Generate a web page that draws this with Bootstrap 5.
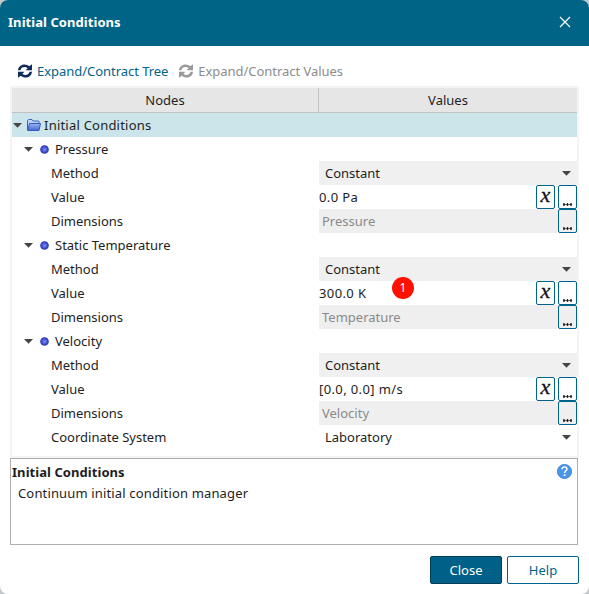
<!DOCTYPE html>
<html lang="en">
<head>
<meta charset="utf-8">
<meta name="viewport" content="width=device-width, initial-scale=1">
<title>Initial Conditions</title>
<link href="https://cdn.jsdelivr.net/npm/bootstrap@5.3.0/dist/css/bootstrap.min.css" rel="stylesheet">
<style>
body{background:#c4c8ca;font-family:"Noto Sans",sans-serif;font-size:13px;line-height:24px;color:#1e1e1e;overflow:hidden}
.dialog{width:589px;height:594px;border-radius:8px}
.titlebar{height:46px;background:#006487;font-size:13px;padding:0 18px 2px 8px}
.titlebar span,.info strong{letter-spacing:.06px}
.tools{height:40px;padding:13px 0 0 17px;color:#00638a}
.tools svg{margin-right:4px}
.tool-tree{letter-spacing:-.04px}
.tool-off{color:#8c8c8c;margin-left:10px;letter-spacing:-.04px}
.tree{margin:0 10px;height:372px;border:2px solid #f4f4f4}
.tree-head{height:25px;background:#e6e6e6;border-bottom:1px solid #c3c3c3}
.tree-row{height:24px}
.name-col{width:307px;white-space:nowrap}
.tree-head .name-col{border-right:1px solid #c3c3c3}
.value-col{width:258px;white-space:nowrap}
.selected{background:#cce5ea}
.selected .caret{margin:0 5px 0 1px}
.selected .folder{margin-right:3px}
.selected span{letter-spacing:.22px}
.group-cell{padding-left:12px}
.leaf-cell{padding-left:39px}
.caret{width:9px;height:5px;flex:none}
.group-cell .caret{margin-right:6.500px}
.group-cell .dot{margin-right:6.500px}
.combo{background:#f0f0f0;padding:0 6px}
.combo-plain{background:#fff}
.readonly-cell{background:#efefef;color:#8a8a8a;padding-left:3px}
.reading{letter-spacing:.38px}
.mini{width:19px;height:24px;border:1px solid #00638a;border-radius:2px;background:#fff;flex:none}
.mini-x{margin-right:3px;font:italic 22px/20px "Liberation Serif",serif;color:#111;justify-content:center;-webkit-text-stroke:.3px #111}
.mini-x span{margin-top:-1px}
.readonly-cell .mini{background:#efefef}
.marker{position:absolute;left:73px;top:-4px;width:22px;height:22px;border-radius:50%;background:#f10;color:#fff;font-size:12px;line-height:22px;text-align:center}
.info{margin:0 11px 0 10px;height:87px;border:1px solid #adadad;padding:1px 5px 0 1px}
.info svg{margin-bottom:2px}
.info-text{padding-left:6px;line-height:18px;letter-spacing:.15px}
.actions{padding:11px 10px 0 0;gap:5px}
.action{width:72px;height:28px;border:1px solid #00638a;border-radius:2px;padding:0 0 1px;font-size:13px;line-height:26px;color:#00638a;background:#fff}
.action-main{background:#006087;border-color:#004059;color:#fff}
</style>
<script src="https://cdn.jsdelivr.net/npm/bootstrap@5.3.0/dist/js/bootstrap.bundle.min.js"></script>
</head>
<body>
<svg width="0" height="0" class="position-absolute" aria-hidden="true">
<defs>
<linearGradient id="fold" x1="0" y1="0" x2="0" y2="1"><stop offset="0" stop-color="#9ab8f2"/><stop offset="1" stop-color="#4267d0"/></linearGradient>
<radialGradient id="ball"><stop offset="0" stop-color="#8290f2"/><stop offset=".5" stop-color="#4d5cd8"/><stop offset="1" stop-color="#262ea2"/></radialGradient>
<symbol id="caret" viewBox="0 0 9 5"><path d="M0 0h9L4.500 4.800z" fill="#454545"/></symbol>
<symbol id="dot" viewBox="0 0 9 9"><circle cx="4.500" cy="4.500" r="4.300" fill="url(#ball)"/></symbol>
<symbol id="sync" viewBox="0 0 16 14"><path d="M1 6.300C1.300 2.700 4.200.500 7.500.500c1.800 0 3.400.7 4.700 1.800L15 .300v6H8.600l2-2C9.700 3.500 8.700 3.100 7.500 3.100 5.400 3.100 3.900 4.300 3.500 6.300zM15 7.700c-.3 3.600-3.200 5.800-6.500 5.800-1.800 0-3.400-.7-4.700-1.800L1 13.700v-6h6.400l-2 2c.9.800 1.900 1.200 3.100 1.200 2.100 0 3.600-1.200 4-3.200z" fill="currentColor"/></symbol>
<symbol id="more" viewBox="0 0 17 22"><path d="M4 18h9v1H4z" fill="#777"/><path d="M4.500 17.500h1v2h-1zM8 17.500h1v2H8zM11.500 17.500h1v2h-1z" fill="#111" stroke="#111" stroke-width=".6"/></symbol>
</defs>
</svg>
<main class="dialog bg-white overflow-hidden">
<header class="titlebar d-flex align-items-center justify-content-between text-white fw-bold">
<span>Initial Conditions</span>
<svg width="12" height="12" viewBox="0 0 12 12"><path d="M1 1l10 10M11 1L1 11" stroke="#fff" stroke-width="1.200"/></svg>
</header>
<div class="tools d-flex align-items-start">
<span class="tool-tree d-flex align-items-center"><svg width="16" height="14" color="#0f2b5e"><use href="#sync"/></svg><span>Expand/Contract Tree</span></span>
<span class="tool-off d-flex align-items-center"><svg width="16" height="14" color="#9a9a9a"><use href="#sync"/></svg><span>Expand/Contract Values</span></span>
</div>
<section class="tree">
<div class="tree-head d-flex text-center"><div class="name-col">Nodes</div><div class="value-col">Values</div></div>
<div class="tree-row selected d-flex align-items-center"><svg class="caret"><use href="#caret"/></svg><svg class="folder" width="14" height="12" viewBox="0 0 14 12"><path d="M.5 11V1.500l1-1h3.500l1 1.500h5.500l.5.500V4" fill="#bdd2fa" stroke="#3a62c4"/><path d="M2.500 4.500h11l-1.500 7H.7z" fill="url(#fold)" stroke="#3459bd"/></svg><span>Initial Conditions</span></div>

<div class="tree-row group-cell d-flex align-items-center"><svg class="caret"><use href="#caret"/></svg><svg class="dot" width="9" height="9"><use href="#dot"/></svg><span>Pressure</span></div>
<div class="tree-row d-flex"><div class="name-col leaf-cell">Method</div><div class="value-col combo d-flex align-items-center justify-content-between"><span>Constant</span><svg class="caret"><use href="#caret"/></svg></div></div>
<div class="tree-row d-flex"><div class="name-col leaf-cell">Value</div><div class="value-col d-flex"><span class="reading me-auto">0.0 Pa</span><span class="mini mini-x d-flex"><span>x</span></span><span class="mini d-flex"><svg width="17" height="22"><use href="#more"/></svg></span></div></div>
<div class="tree-row d-flex"><div class="name-col leaf-cell">Dimensions</div><div class="value-col readonly-cell d-flex justify-content-between"><span>Pressure</span><span class="mini d-flex"><svg width="17" height="22"><use href="#more"/></svg></span></div></div>

<div class="tree-row group-cell d-flex align-items-center"><svg class="caret"><use href="#caret"/></svg><svg class="dot" width="9" height="9"><use href="#dot"/></svg><span>Static Temperature</span></div>
<div class="tree-row d-flex"><div class="name-col leaf-cell">Method</div><div class="value-col combo d-flex align-items-center justify-content-between"><span>Constant</span><svg class="caret"><use href="#caret"/></svg></div></div>
<div class="tree-row d-flex"><div class="name-col leaf-cell">Value</div><div class="value-col d-flex position-relative"><span class="reading me-auto">300.0 K</span><span class="marker">1</span><span class="mini mini-x d-flex"><span>x</span></span><span class="mini d-flex"><svg width="17" height="22"><use href="#more"/></svg></span></div></div>
<div class="tree-row d-flex"><div class="name-col leaf-cell">Dimensions</div><div class="value-col readonly-cell d-flex justify-content-between"><span>Temperature</span><span class="mini d-flex"><svg width="17" height="22"><use href="#more"/></svg></span></div></div>

<div class="tree-row group-cell d-flex align-items-center"><svg class="caret"><use href="#caret"/></svg><svg class="dot" width="9" height="9"><use href="#dot"/></svg><span>Velocity</span></div>
<div class="tree-row d-flex"><div class="name-col leaf-cell">Method</div><div class="value-col combo d-flex align-items-center justify-content-between"><span>Constant</span><svg class="caret"><use href="#caret"/></svg></div></div>
<div class="tree-row d-flex"><div class="name-col leaf-cell">Value</div><div class="value-col d-flex"><span class="reading me-auto">[0.0, 0.0] m/s</span><span class="mini mini-x d-flex"><span>x</span></span><span class="mini d-flex"><svg width="17" height="22"><use href="#more"/></svg></span></div></div>
<div class="tree-row d-flex"><div class="name-col leaf-cell">Dimensions</div><div class="value-col readonly-cell d-flex justify-content-between"><span>Velocity</span><span class="mini d-flex"><svg width="17" height="22"><use href="#more"/></svg></span></div></div>
<div class="tree-row d-flex"><div class="name-col leaf-cell">Coordinate System</div><div class="value-col combo combo-plain d-flex align-items-center justify-content-between"><span>Laboratory</span><svg class="caret"><use href="#caret"/></svg></div></div>
</section>
<section class="info">
<div class="d-flex align-items-center justify-content-between"><strong>Initial Conditions</strong><svg width="15" height="15" viewBox="0 0 15 15"><circle cx="7.500" cy="7.500" r="7.100" fill="#4797e8" stroke="#3b78c6" stroke-width=".8"/><path d="M5 5.100C5.200 2.200 10 2.300 9.900 5c0 1.700-2.300 1.900-2.300 4" fill="none" stroke="#fff" stroke-width="1.600"/><path d="M6.700 10.300h1.800V12H6.700z" fill="#fff"/></svg></div>
<div class="info-text">Continuum initial condition manager</div>
</section>
<footer class="actions d-flex justify-content-end"><button class="btn action action-main">Close</button><button class="btn action">Help</button></footer>
</main>
</body>
</html>
